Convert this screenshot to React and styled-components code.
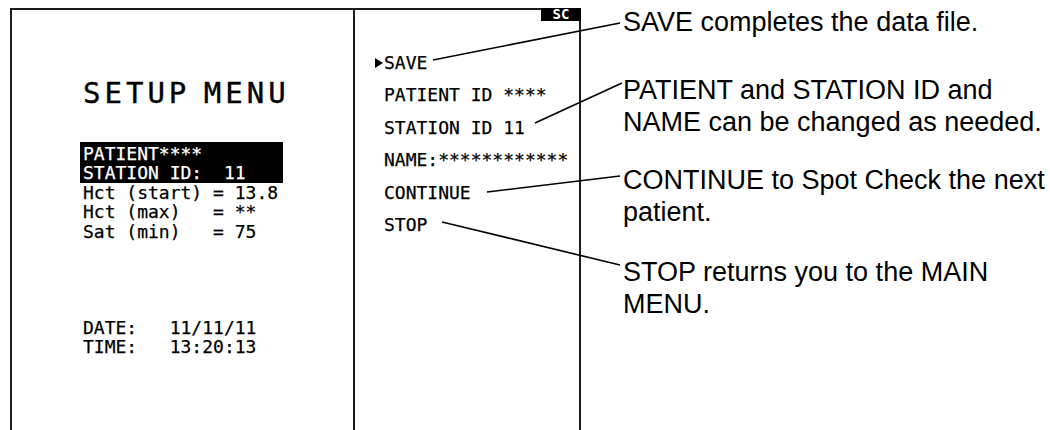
import React from "react";
import styled, { createGlobalStyle } from "styled-components";

const GlobalStyle = createGlobalStyle`
  html, body {
    margin: 0;
    padding: 0;
    background: #fff;
    color: #000;
  }
  body {
    width: 1050px;
    height: 430px;
    overflow: hidden;
  }
`;

const lcdFont = `"DejaVu Sans Mono", "Liberation Mono", monospace`;

const Page = styled.div`
  position: relative;
  display: flex;
  align-items: flex-start;
  width: 1050px;
  height: 430px;
  padding-left: 10px;
  box-sizing: border-box;
`;

const Screen = styled.div`
  display: flex;
  margin-top: 8px;
  width: 571px;
  height: 422px;
  box-sizing: border-box;
  border: 2px solid #1c1c1c;
  border-bottom: none;
`;

const LeftPanel = styled.div`
  display: flex;
  flex-direction: column;
  width: 343px;
  box-sizing: border-box;
  border-right: 2px solid #1c1c1c;
  padding: 66px 0 0 68px;
`;

const Title = styled.div`
  font-family: ${lcdFont};
  font-size: 29px;
  line-height: 34px;
  letter-spacing: 4px;
  word-spacing: -8px;
  margin-left: 3px;
  white-space: pre;
  -webkit-text-stroke: 0.4px currentColor;
`;

const Lcd = styled.div`
  font-family: ${lcdFont};
  font-size: 18px;
  line-height: 19.25px;
  color: inherit;
  white-space: pre;
  padding-left: 3px;
  margin-top: ${(p) => p.$top || 0}px;
  -webkit-text-stroke: 0.25px currentColor;
`;

const Highlight = styled.div`
  width: 203px;
  height: 41px;
  box-sizing: border-box;
  background: #000;
  color: #fff;
  padding-top: 2px;
  margin-top: 32px;
`;

const RightPanel = styled.div`
  position: relative;
  flex: 1;
  padding: 37px 0 0 29px;
`;

const Badge = styled.div`
  position: absolute;
  top: -2px;
  right: -2px;
  width: 40px;
  height: 13px;
  background: #000;
  color: #fff;
  font-family: ${lcdFont};
  font-size: 14px;
  line-height: 13px;
  font-weight: bold;
  text-align: center;
`;

const Menu = styled.div`
  display: flex;
  flex-direction: column;
`;

const Item = styled.div`
  position: relative;
  font-family: ${lcdFont};
  font-size: 18px;
  line-height: 32.4px;
  white-space: pre;
  -webkit-text-stroke: 0.25px currentColor;

  ${(p) =>
    p.$selected &&
    `
    &::before {
      content: "";
      position: absolute;
      left: -9px;
      top: 11px;
      border-style: solid;
      border-width: 5px 0 5px 8px;
      border-color: transparent transparent transparent #000;
    }
  `}
`;

const Notes = styled.div`
  display: flex;
  flex-direction: column;
  margin-left: 42px;
  width: 427px;
  padding-top: 6px;
`;

const Note = styled.p`
  margin: ${(p) => p.$top}px 0 0 0;
  font-family: "Liberation Sans", Arial, sans-serif;
  font-size: 27px;
  line-height: 32px;
`;

const Leaders = styled.svg`
  position: absolute;
  left: 0;
  top: 0;
  pointer-events: none;
`;

const leaders = [
  [433, 60, 620, 23],
  [535, 123, 622, 83],
  [487, 192, 620, 176],
  [442, 222, 620, 265],
];

const menuItems = [
  { label: "SAVE", selected: true },
  { label: "PATIENT ID ****" },
  { label: "STATION ID 11" },
  { label: "NAME:************" },
  { label: "CONTINUE" },
  { label: "STOP" },
];

const notes = [
  { top: 0, text: "SAVE completes the data file." },
  { top: 36, text: "PATIENT and STATION ID and NAME can be changed as needed." },
  { top: 26, text: "CONTINUE to Spot Check the next patient." },
  { top: 28, text: "STOP returns you to the MAIN MENU." },
];

export default function App() {
  return (
    <>
      <GlobalStyle />
      <Page>
        <Screen>
          <LeftPanel>
            <Title>SETUP MENU</Title>
            <Highlight>
              <Lcd>PATIENT****</Lcd>
              <Lcd>STATION ID:  11</Lcd>
            </Highlight>
            <Lcd>Hct (start) = 13.8</Lcd>
            <Lcd>Hct (max)   = **</Lcd>
            <Lcd>Sat (min)   = 75</Lcd>
            <Lcd $top={77}>DATE:   11/11/11</Lcd>
            <Lcd>TIME:   13:20:13</Lcd>
          </LeftPanel>
          <RightPanel>
            <Badge>SC</Badge>
            <Menu>
              {menuItems.map((m) => (
                <Item key={m.label} $selected={m.selected}>
                  {m.label}
                </Item>
              ))}
            </Menu>
          </RightPanel>
        </Screen>
        <Notes>
          {notes.map((n) => (
            <Note key={n.text} $top={n.top}>
              {n.text}
            </Note>
          ))}
        </Notes>
        <Leaders width="1050" height="430" viewBox="0 0 1050 430">
          {leaders.map(([x1, y1, x2, y2]) => (
            <line key={`${x1}-${y1}`} x1={x1} y1={y1} x2={x2} y2={y2} stroke="#000" strokeWidth="1.6" />
          ))}
        </Leaders>
      </Page>
    </>
  );
}
